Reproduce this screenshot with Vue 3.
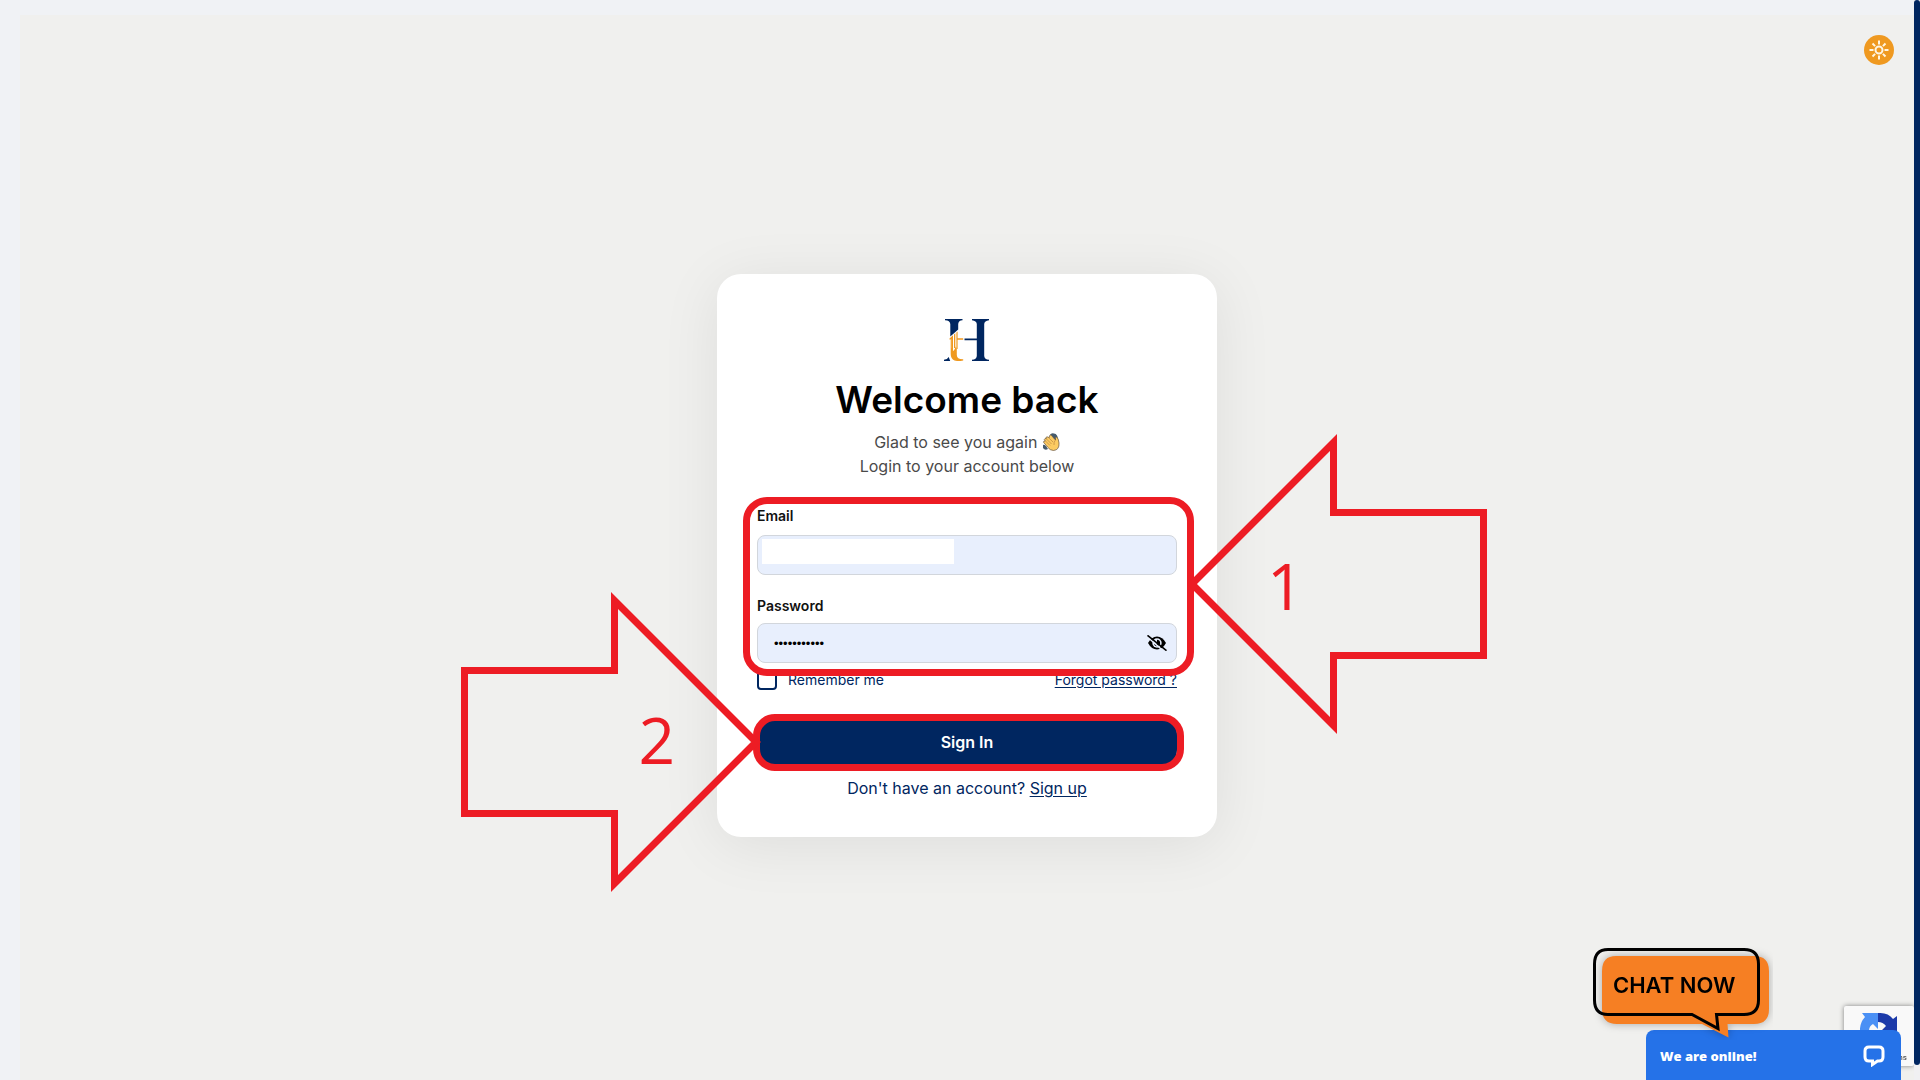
<script setup>
import { ref } from 'vue'

const email = ref('')
const password = ref('abcdefghijk')
const remember = ref(false)
</script>

<template>
  <div class="shell">
    <main class="stage">
      <button class="theme" type="button" aria-label="Toggle theme">
        <svg viewBox="0 0 30 30" width="30" height="30" fill="none" stroke="#fff6e4" stroke-width="2">
          <circle cx="15" cy="15" r="3.5" />
          <path d="M15 5.500v4M15 20.500v4M5.500 15h4M20.500 15h4M8.500 8.500l2.600 2.600M18.900 18.900l2.600 2.600M21.500 8.500l-2.600 2.600M11.100 18.900l-2.600 2.600" />
        </svg>
      </button>

      <section class="card">
        <svg class="logo" viewBox="0 0 46 42" width="46" height="42" aria-hidden="true">
          <g fill="#002660">
            <path d="M1 0H18.500V1.200Q14.500 1.500 14.200 5V10.500L6.300 17.500V5Q6 1.500 1 1.200Z" />
            <path d="M28 0H45V1.200Q40.500 1.600 40.200 5V37Q40.500 40.400 45 40.800V42H28V40.800Q32.500 40.400 32.800 37V21.300H20.500V19.400H32.800V5Q32.500 1.600 28 1.200Z" />
            <path d="M4.700 38L6.200 42H0V40.800Q3.500 40.500 4.700 38Z" />
          </g>
          <g fill="#ef9920">
            <path d="M6.700 20.200H7.800V29L9.300 32L10.500 30.500L11.900 27.500L12.800 30V36Q13 40.500 19.200 40.300V41.600Q14 42.700 10.500 41.400Q6.700 40 6.700 35Z" />
            <path d="M5.500 19.400L9 16.200V31H7.700V20.500H5.500ZM10 15.400L11.300 14.200V29H10ZM12.400 13.600L13.600 12.500V19.300H19.200V20.700H13.600V30H12.400Z" />
          </g>
        </svg>

        <h1>Welcome back</h1>
        <p class="lead">
          Glad to see you again
          <svg class="wave" viewBox="0 0 18 18" width="18" height="18" aria-label="waving hand">
            <path d="M8 2Q9-.2 12 .5Q16 1 16 7L14 8ZM1 12Q2 11 4 13L6 16Q3 18 1 15Z" fill="#455a6c" />
            <path d="M9 1.800L12 5.500L13.500 7Q13 4 14.500 4Q16.500 5 17 10Q17.500 17 11.500 17.500Q8 17.500 5.500 14L1.500 9.200Q1.500 7.500 3.300 8L2.300 6.500Q2.700 5 4.300 5.800L3.900 4.500Q5 3.200 6.300 4.300L7 5Q7 2 9 1.800Z" fill="#fccb62" stroke="#665542" stroke-width=".7" />
            <path d="M3.500 8L8 12.500M4.500 6L9.500 11M6.500 4.600L11 9M13.500 7Q11.500 9 12 12" fill="none" stroke="#bd853f" stroke-width=".7" />
          </svg>
          <br />Login to your account below
        </p>

        <form @submit.prevent>
          <label class="name" for="email">Email</label>
          <div class="field">
            <input id="email" v-model="email" type="email" />
            <span class="redaction"></span>
          </div>
          <label class="name second" for="password">Password</label>
          <div class="field">
            <input id="password" v-model="password" type="password" />
            <button class="eye" type="button" aria-label="Show password">
              <svg viewBox="0 0 20 16" width="20" height="16">
                <path d="M1 8Q4.500 1.500 10 1.500T19 8Q15.500 14.500 10 14.500T1 8Z" fill="#000" />
                <circle cx="10" cy="8" r="4.700" fill="#e8effd" />
                <path d="M10 4.800A3.200 3.200 0 1 1 7 9.300L10 8.500Z" fill="#000" />
                <path d="M0 1.500L17.500 17" stroke="#e8effd" stroke-width="1.500" />
                <path d="M.5 .3L19.500 15.700" stroke="#000" stroke-width="1.500" />
              </svg>
            </button>
          </div>
          <div class="options">
            <label class="remember"><input v-model="remember" type="checkbox" />Remember me</label>
            <a href="#">Forgot password ?</a>
          </div>
          <button class="submit" type="submit">Sign In</button>
        </form>
        <p class="join">Don't have an account? <a href="#">Sign up</a></p>

        <span class="mark fields-mark"></span>
        <span class="mark submit-mark"></span>
        <div class="arrow arrow-one">
          <svg viewBox="0 0 300 300" width="300" height="300">
            <path d="M5 150L146.500 8.500V78.500H296.500V221.500H146.500V291.500Z" />
          </svg>
          <span>1</span>
        </div>
        <div class="arrow arrow-two">
          <svg viewBox="0 0 300 300" width="300" height="300">
            <path d="M295 150L153.500 8.500V78.500H3.500V221.500H153.500V291.500Z" />
          </svg>
          <span>2</span>
        </div>
      </section>
    </main>

    <aside class="captcha">
      <svg viewBox="0 0 38 38" width="38" height="38">
        <path d="M0 19A19 19 0 0 1 5 5L2 1H18V17L13 12Q9 14 9 19Z" fill="#4a90f5" />
        <path d="M18 1Q28 0 33 7L37 4V19H21L26 14Q23 10 18 10Z" fill="#1c3aa9" />
        <path d="M0 19H9Q12 29 20 28L26 25L33 32Q27 38 19 38Q4 37 0 19Z" fill="#ababab" />
      </svg>
      <small>Privacy - Terms</small>
    </aside>
    <button class="online" type="button">
      We are online!
      <svg viewBox="0 0 22 22" width="22" height="22" fill="none" stroke="#fff" stroke-width="3">
        <path d="M6 2H16Q20 2 20 6V12Q20 16 16 16H14.500L9.500 19.500V16H6Q2 16 2 12V6Q2 2 6 2Z" />
      </svg>
    </button>
    <button class="chat" type="button">
      <svg viewBox="0 0 180 94" width="180" height="94">
        <path class="bubble" d="M23 10H161Q176 10 176 25V63Q176 78 161 78H134.500L135.500 91.500L109 78H24Q9 78 9 63V25Q9 10 23 10Z" fill="#f67f23" />
        <path d="M15 3.500H151Q165.500 3.500 165.500 18V54Q165.500 68.500 151 68.500H123.500L125 82.500L99 68.500H15Q1.500 68.500 1.500 54V18Q1.500 3.500 15 3.500Z" fill="none" stroke="#000" stroke-width="3" />
      </svg>
      <span>CHAT NOW</span>
    </button>
    <div class="scroll"><span></span></div>
  </div>
</template>

<style>
body {
  margin: 0;
}
</style>

<style scoped>
* {
  box-sizing: border-box;
}

.shell {
  min-height: 100vh;
  padding: 15px 6px 0 20px;
  background: #f0f2f5;
  color: #002660;
  font-family: Inter, "Liberation Sans", sans-serif;
}

button {
  border: 0;
  padding: 0;
  font-family: inherit;
  cursor: pointer;
}

svg {
  display: block;
}

a {
  color: inherit;
  text-underline-offset: 2px;
}

.stage {
  position: relative;
  display: flex;
  align-items: center;
  justify-content: center;
  min-height: calc(100vh - 15px);
  padding-top: 16px;
  background: #f0f0ee;
}

.theme {
  position: absolute;
  top: 20px;
  right: 20px;
  border-radius: 50%;
  background: #ef9920;
}

.card {
  position: relative;
  width: 500px;
  padding: 45px 40px 37px;
  border-radius: 24px;
  background: #fff;
  box-shadow: 0 8px 60px rgba(0, 0, 0, 0.08);
}

.logo {
  margin: 0 auto;
}

h1 {
  margin: 15px 0 6px;
  color: #000;
  font-size: 37px;
  font-weight: 600;
  line-height: 48px;
  text-align: center;
}

.lead {
  margin: 0;
  color: #4a4a4a;
  font-size: 16px;
  line-height: 24px;
  text-align: center;
}

.wave {
  display: inline-block;
  vertical-align: -3px;
}

form {
  margin-top: 28px;
}

.name {
  display: block;
  margin-bottom: 9px;
  color: #111;
  font-size: 14px;
  font-weight: 600;
  line-height: 20px;
}

.second {
  margin-top: 21px;
  margin-bottom: 7px;
}

.field {
  position: relative;
  height: 40px;
}

.field input {
  width: 100%;
  height: 40px;
  padding: 0 48px 0 16px;
  border: 1px solid #d2d6dc;
  border-radius: 8px;
  background: #e8effd;
  color: #000;
  font-family: "Liberation Sans", sans-serif;
  font-size: 13px;
}

.redaction {
  position: absolute;
  top: 4px;
  left: 5px;
  width: 192px;
  height: 25px;
  background: #fff;
}

.eye {
  position: absolute;
  top: 12px;
  right: 10px;
  background: none;
}

.options {
  display: flex;
  align-items: center;
  justify-content: space-between;
  margin-top: 7px;
  font-size: 14px;
  line-height: 20px;
}

.remember {
  display: flex;
  align-items: center;
  gap: 11px;
}

.remember input {
  width: 20px;
  height: 20px;
  margin: 0;
  border: 2px solid #002660;
  border-radius: 4px;
  background: #fff;
  appearance: none;
}

.submit {
  display: block;
  width: 100%;
  height: 48px;
  margin-top: 28px;
  border-radius: 16px;
  background: #002660;
  color: #fff;
  font-size: 16px;
  font-weight: 600;
}

.join {
  margin: 10px 0 0;
  font-size: 16px;
  line-height: 24px;
  text-align: center;
}

.mark {
  position: absolute;
  border: 7px solid #ed1c24;
  pointer-events: none;
}

.fields-mark {
  top: 223px;
  right: 23px;
  left: 26px;
  height: 179px;
  border-radius: 24px;
}

.submit-mark {
  top: 440px;
  right: 33px;
  left: 36px;
  height: 57px;
  border-radius: 22px;
}

.arrow {
  position: absolute;
  color: #ed1c24;
  font-family: "Open Sans", sans-serif;
  font-size: 64px;
  line-height: 64px;
  pointer-events: none;
}

.arrow path {
  fill: none;
  stroke: currentColor;
  stroke-width: 7;
}

.arrow span {
  position: absolute;
}

.arrow-one {
  top: 160px;
  left: 470px;
}

.arrow-one span {
  top: 120px;
  left: 80px;
}

.arrow-two {
  top: 318px;
  right: 456px;
}

.arrow-two span {
  top: 116px;
  right: 86px;
}

.captcha {
  position: fixed;
  right: 6px;
  bottom: 14px;
  width: 70px;
  height: 60px;
  padding: 6px 0 0 16px;
  border-radius: 2px;
  background: #f9f9f9;
  box-shadow: 0 0 5px #808080;
  overflow: hidden;
}

.captcha small {
  position: absolute;
  right: 7px;
  bottom: 3px;
  color: #333;
  font-family: Roboto, sans-serif;
  font-size: 8px;
  line-height: 10px;
  white-space: nowrap;
}

.online {
  position: fixed;
  right: 19px;
  bottom: 0;
  display: flex;
  align-items: center;
  justify-content: space-between;
  width: 255px;
  height: 50px;
  padding: 2px 16px 0 14px;
  border-radius: 8px 8px 0 0;
  background: #2572e8;
  color: #fff;
  font-family: "Open Sans", sans-serif;
  font-size: 13px;
  font-weight: 800;
}

.chat {
  position: fixed;
  right: 147px;
  bottom: 40px;
  background: none;
}

.bubble {
  filter: drop-shadow(0 0 4px rgba(0, 0, 0, 0.3));
}

.chat span {
  position: absolute;
  top: 26px;
  left: 20px;
  color: #000;
  font-size: 22px;
  font-weight: 600;
  line-height: 26px;
  white-space: nowrap;
}

.scroll {
  position: fixed;
  top: 0;
  right: 0;
  bottom: 0;
  width: 6px;
  padding-bottom: 15px;
  background: #f0f0f2;
}

.scroll span {
  display: block;
  height: 100%;
  border-radius: 3px;
  background: #002660;
}
</style>
